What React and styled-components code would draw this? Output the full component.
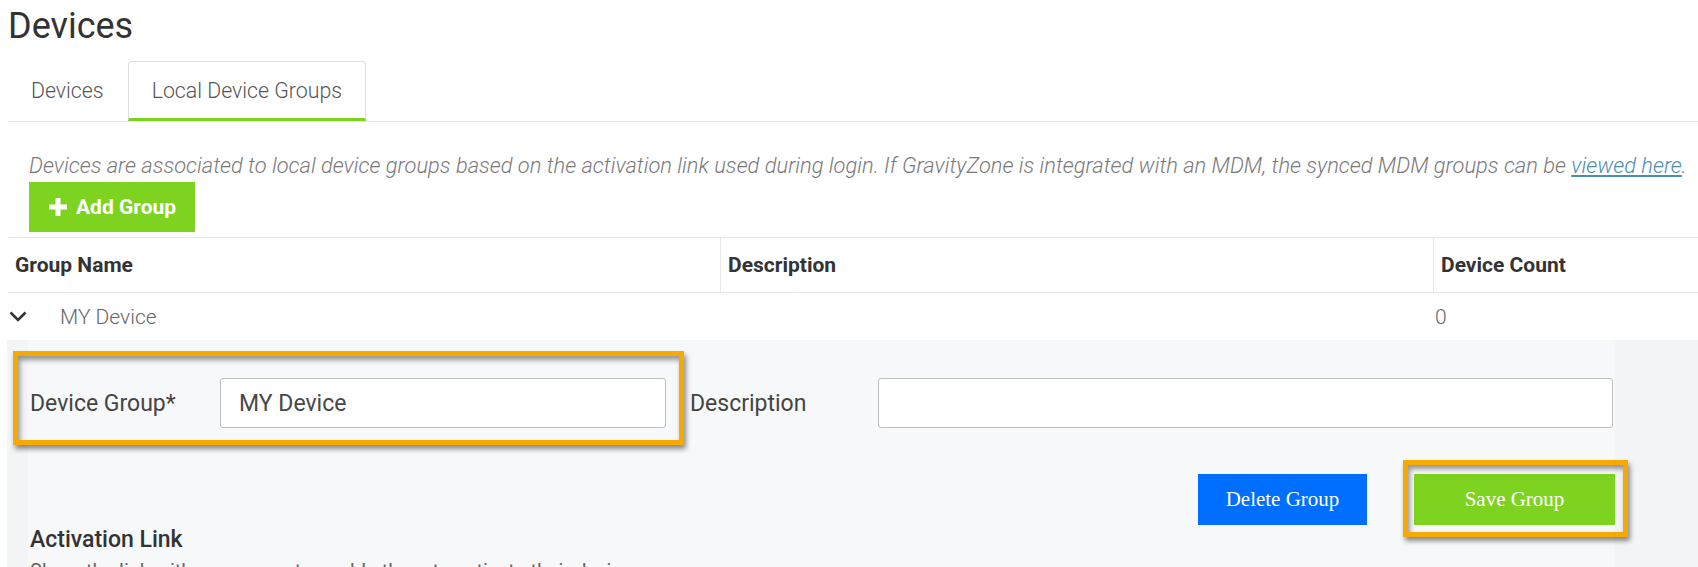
import React from 'react'
import styled, { createGlobalStyle } from 'styled-components'

const GlobalStyle = createGlobalStyle`
	* {
		box-sizing: border-box;
	}

	body {
		margin: 0;
		background: #ffffff;
		font-family: Roboto, "Liberation Sans", Arial, sans-serif;
		color: #333333;
		overflow: hidden;
	}
`

const Page = styled.div`
	width: 100%;
	padding-left: 8px;
`

const Title = styled.h1`
	margin: 0;
	padding-top: 5px;
	font-size: 36px;
	line-height: 42px;
	font-weight: 400;
	color: #333333;
`

const TabBar = styled.div`
	display: flex;
	margin-top: 14px;
	border-bottom: 1px solid #e4e4e4;
`

const Tab = styled.div`
	height: 60px;
	padding: 0 23px 0 ${p => (p.$active ? 23 : 22)}px;
	display: flex;
	align-items: center;
	font-size: 21.3px;
	font-weight: 300;
	color: #555555;
	border: 1px solid ${p => (p.$active ? '#dddddd' : 'transparent')};
	border-bottom: 3px solid ${p => (p.$active ? '#7ed321' : 'transparent')};
	border-radius: 4px 4px 0 0;
`

const Intro = styled.div`
	padding-left: 21px;
	padding-top: 31px;
`

const Note = styled.p`
	margin: 0;
	font-size: 21.9px;
	line-height: 25px;
	font-style: italic;
	font-weight: 300;
	color: #7a7a7a;

	a {
		color: #4d8db0;
		text-decoration: underline;
	}
`

const AddButton = styled.button`
	margin-top: 4px;
	height: 50px;
	padding: 0 19px 0 20px;
	display: flex;
	align-items: center;
	gap: 9px;
	border: none;
	background: #7ed321;
	color: #ffffff;
	font-family: Roboto, "Liberation Sans", Arial, sans-serif;
	font-size: 21px;
	font-weight: 700;
`

const Table = styled.div`
	margin-top: 5px;
`

const HeaderRow = styled.div`
	display: grid;
	grid-template-columns: 712px 713px 1fr;
	height: 56px;
	border-top: 1px solid #e6e6e6;
	border-bottom: 1px solid #e6e6e6;
`

const HeaderCell = styled.div`
	display: flex;
	align-items: center;
	padding-left: 7px;
	font-size: 21px;
	font-weight: 700;
	color: #333333;
	border-left: ${p => (p.$first ? 'none' : '1px solid #e8e8e8')};
`

const GroupRow = styled.div`
	display: grid;
	grid-template-columns: 1425px 1fr;
	height: 47px;
	align-items: center;
	font-size: 21px;
	font-weight: 300;
	color: #666666;
`

const GroupName = styled.div`
	display: flex;
	align-items: center;
	gap: 33px;
	padding-left: 1px;
`

const Count = styled.div`
	padding-left: 2px;
`

const Panel = styled.div`
	margin-left: -1px;
	background: #f3f4f6;
	padding-left: 21px;
	height: 240px;
`

const Form = styled.div`
	width: 1587px;
	height: 100%;
	background: #f7f8f9;
	padding-top: 38px;
`

const FieldRow = styled.div`
	display: flex;
	align-items: center;
`

const Field = styled.div`
	position: relative;
	display: flex;
	align-items: center;
`

const Label = styled.label`
	width: ${p => p.$width}px;
	padding-left: 2px;
	font-size: 23px;
	color: #444444;
`

const Input = styled.input`
	width: ${p => p.$width}px;
	height: 50px;
	padding: 0 18px;
	border: 1px solid #bdbdbd;
	border-radius: 3px;
	background: #ffffff;
	font-family: Roboto, "Liberation Sans", Arial, sans-serif;
	font-size: 23px;
	color: #484848;
	outline: none;
`

const Highlight = styled.div`
	position: absolute;
	top: ${p => p.$top}px;
	left: ${p => p.$left}px;
	right: ${p => p.$right}px;
	bottom: ${p => p.$bottom}px;
	border: 5px solid #f6a900;
	box-shadow: 2px 4px 5px rgba(0, 0, 0, 0.45), inset 2px 4px 5px rgba(0, 0, 0, 0.4);
	pointer-events: none;
`

const Actions = styled.div`
	display: flex;
	justify-content: flex-end;
	gap: 47px;
	margin-top: 46px;
`

const ActionWrap = styled.div`
	position: relative;
`

const ActionButton = styled.button`
	width: ${p => p.$width}px;
	height: 51px;
	border: none;
	background: ${p => p.$color};
	color: #ffffff;
	font-family: "Liberation Serif", "Times New Roman", serif;
	font-size: 21px;
`

const SectionTitle = styled.div`
	margin-top: 1px;
	padding-left: 2px;
	font-size: 23px;
	line-height: 27px;
	font-weight: 500;
	color: #333333;
`

const SectionText = styled.div`
	margin-top: 6px;
	padding-left: 2px;
	font-size: 20px;
	color: #666666;
`

function Chevron() {
	return (
		<svg width="18" height="11" viewBox="0 0 18 11" fill="none">
			<polyline points="1.5,1.5 9,9 16.5,1.5" stroke="#333333" strokeWidth="2.6" />
		</svg>
	)
}

function Plus() {
	return (
		<svg width="18" height="18" viewBox="0 0 18 18">
			<rect x="6.5" y="0" width="5" height="18" fill="#ffffff" />
			<rect x="0" y="6.5" width="18" height="5" fill="#ffffff" />
		</svg>
	)
}

export default function App() {
	return (
		<>
			<GlobalStyle />
			<Page>
				<Title>Devices</Title>
				<TabBar>
					<Tab>Devices</Tab>
					<Tab $active>Local Device Groups</Tab>
				</TabBar>
				<Intro>
					<Note>
						Devices are associated to local device groups based on the activation link used during login. If GravityZone is integrated with an MDM, the synced MDM groups can be <a href="#mdm">viewed here</a>.
					</Note>
					<AddButton>
						<Plus />
						Add Group
					</AddButton>
				</Intro>
				<Table>
					<HeaderRow>
						<HeaderCell $first>Group Name</HeaderCell>
						<HeaderCell>Description</HeaderCell>
						<HeaderCell>Device Count</HeaderCell>
					</HeaderRow>
					<GroupRow>
						<GroupName>
							<Chevron />
							MY Device
						</GroupName>
						<Count>0</Count>
					</GroupRow>
					<Panel>
						<Form>
							<FieldRow>
								<Field>
									<Label $width={192}>Device Group*</Label>
									<Input $width={446} value="MY Device" readOnly />
									<Highlight $top={-27} $left={-15} $right={-18} $bottom={-17} />
								</Field>
								<Field>
									<Label $width={190} style={{ marginLeft: 22 }}>Description</Label>
									<Input $width={735} value="" readOnly />
								</Field>
							</FieldRow>
							<Actions>
								<ActionWrap>
									<ActionButton $width={169} $color="#006eff">Delete Group</ActionButton>
								</ActionWrap>
								<ActionWrap>
									<ActionButton $width={201} $color="#7ed321">Save Group</ActionButton>
									<Highlight $top={-14} $left={-11} $right={-13} $bottom={-12} />
								</ActionWrap>
							</Actions>
							<SectionTitle>Activation Link</SectionTitle>
							<SectionText>Share the link with your users to enable them to activate their devices.</SectionText>
						</Form>
					</Panel>
				</Table>
			</Page>
		</>
	)
}
